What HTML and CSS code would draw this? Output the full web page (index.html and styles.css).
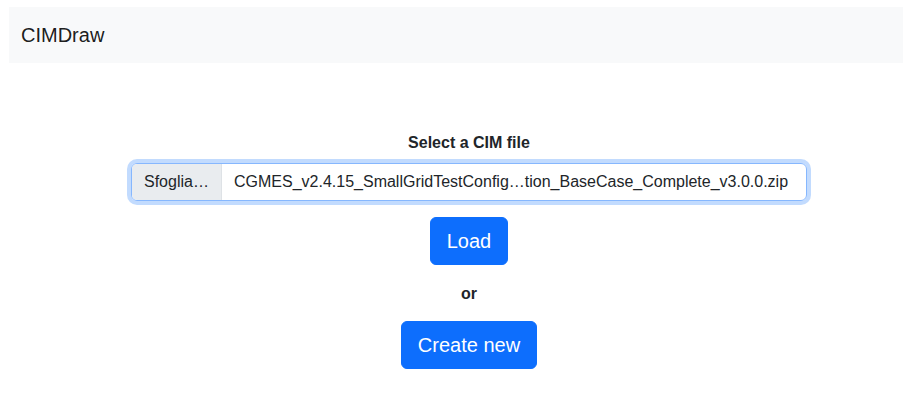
FILE: index.html
```html
<!DOCTYPE html>
<html lang="en">
<head>
    <meta charset="UTF-8">
    <meta name="viewport" content="width=device-width, initial-scale=1.0">
    <title>CIMDraw</title>
    <link rel="stylesheet" href="styles.css">
</head>
<body>
    <nav class="navbar">
        <span class="navbar-brand">CIMDraw</span>
    </nav>

    <main class="loader">
        <label class="file-label" for="cim-file">Select a CIM file</label>
        <div class="file-input" id="cim-file">
            <span class="file-button">Sfoglia…</span>
            <span class="file-name">CGMES_v2.4.15_SmallGridTestConfig…tion_BaseCase_Complete_v3.0.0.zip</span>
        </div>
        <button class="btn">Load</button>
        <div class="or">or</div>
        <button class="btn">Create new</button>
    </main>
</body>
</html>
```

FILE: styles.css
```css
body {
    font-family: 'Liberation Sans', Arial, sans-serif;
    color: #212529;
    background-color: #fff;
    margin: 7px 0 0 9px;
}

.navbar {
    background-color: #f8f9fa;
    padding: 8px 12px;
}

.navbar-brand {
    display: block;
    padding: 5px 0;
    font-size: 20px;
    line-height: 30px;
    color: rgba(0, 0, 0, 0.9);
}

.loader {
    display: flex;
    flex-direction: column;
    align-items: center;
    gap: 16px;
    padding-left: 26px;
    margin-top: 68px;
}

.file-label {
    font-weight: bold;
    font-size: 16px;
    line-height: 24px;
    margin-bottom: -8px;
}

.file-input {
    display: flex;
    width: 676px;
    box-sizing: border-box;
    border: 1px solid #86b7fe;
    border-radius: 6px;
    box-shadow: 0 0 0 4px rgba(13, 110, 253, 0.25);
    font-size: 16px;
    line-height: 24px;
    overflow: hidden;
}

.file-button {
    width: 90px;
    box-sizing: border-box;
    padding: 6px 12px;
    background-color: #e9ecef;
    border-right: 1px solid #dee2e6;
    white-space: nowrap;
}

.file-name {
    padding: 6px 12px;
    white-space: nowrap;
}

.btn {
    font-family: inherit;
    font-size: 20px;
    line-height: 30px;
    padding: 8px 16px;
    color: #fff;
    background-color: #0d6efd;
    border: 1px solid #0d6efd;
    border-radius: 6px;
    cursor: pointer;
}

.or {
    font-weight: bold;
    font-size: 16px;
    line-height: 24px;
    padding-top: 1px;
    margin-bottom: -1px;
}
```
